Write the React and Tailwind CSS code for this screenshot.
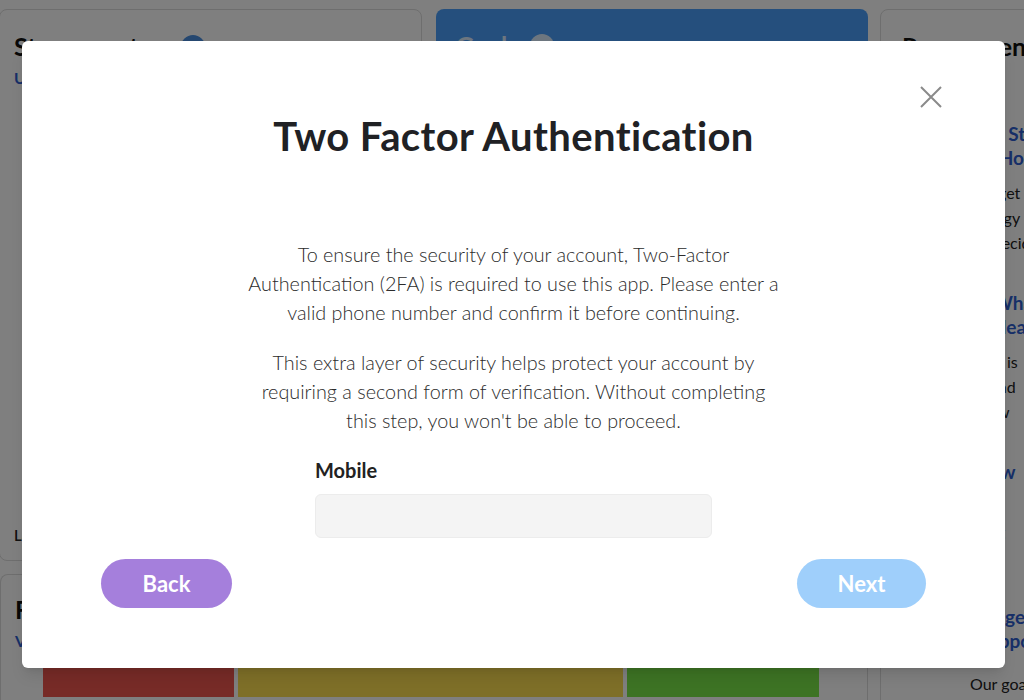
import React, { useState } from 'react';

const recs = [
  { title: ['Tips to Beat Stress that', 'Work from Home'], body: ['Learn how to get c', 'a simple strategy', 'that you can decide'] },
  { title: ['Stress and What it', 'Means for Health'], body: ['Everyone\'s life is', 'manageable and', 'know how to w'] },
  { title: ['How to Grow'], body: ['Take the first', 'step by finding', 'to manage'] },
  { title: ['Stress Management', 'Without Support'], body: ['Our goals'], indent: true },
];

const Background = () => (
  <div className="h-[700px] w-[1024px] overflow-hidden bg-white pt-[9px]">
    <div className="flex gap-3">
      <div className="flex w-[868px] shrink-0 flex-col gap-[13px]">
        <div className="flex gap-[14px]">
          {/* Stressometer */}
          <div className="-ml-px flex h-[552px] w-[423px] flex-col justify-between rounded-lg border border-[#dcdcdc] px-[14px] pb-[14px] pt-[18px]">
            <div>
              <div className="flex items-center gap-5">
                <h2 className="text-[25px] font-bold text-[#111]">Stressometer</h2>
                <span className="flex h-6 w-6 items-center justify-center rounded-full bg-[#4a8fe0] text-sm font-bold text-white">?</span>
              </div>
              <a className="text-[16px] font-bold text-[#2f5fd0]">Update</a>
            </div>
            <p className="text-[15px] font-semibold text-[#222]">Last updated today</p>
          </div>
          {/* Goals */}
          <div className="h-[552px] w-[432px] rounded-lg bg-[#4a9ffa] px-5 pt-[18px]">
            <div className="flex items-center gap-3">
              <h2 className="text-[25px] font-bold text-white/80">Goals</h2>
              <span className="flex h-6 w-6 items-center justify-center rounded-full bg-white/80 text-sm font-bold text-[#4a9ffa]">?</span>
            </div>
          </div>
        </div>
        {/* Feelings */}
        <div className="h-[140px] rounded-t-lg border border-b-0 border-[#dcdcdc] px-[14px] pt-[16px]">
          <h2 className="text-[25px] font-bold text-[#111]">Feelings</h2>
          <a className="text-[16px] font-bold text-[#2f5fd0]">View all</a>
          <div className="mt-[14px] flex gap-1 pl-7">
            <div className="h-[30px] w-[191px] bg-[#ee564e]" />
            <div className="h-[30px] w-[385px] bg-[#fcde50]" />
            <div className="h-[30px] w-[192px] bg-[#7ae648]" />
          </div>
        </div>
      </div>
      {/* Recommendations */}
      <div className="w-[420px] shrink-0 rounded-lg border border-[#dcdcdc] px-[21px] pt-[18px]">
        <h2 className="text-[25px] font-bold text-[#111]">Recommendations</h2>
        <div className="mt-[56px] flex flex-col gap-[36px]">
          {recs.map((r, i) => (
            <div key={i}>
              {r.title.map((t) => (
                <p key={t} className="text-[19px] font-bold leading-6 text-[#2f5fd0]">{t}</p>
              ))}
              <div className={r.indent ? 'mt-[18px] pl-[68px]' : 'mt-[10px]'}>
                {r.body.map((b) => (
                  <p key={b} className="text-[16px] leading-[25px] text-[#222]">{b}</p>
                ))}
              </div>
            </div>
          ))}
        </div>
      </div>
    </div>
  </div>
);

const App = () => {
  const [mobile, setMobile] = useState('');

  return (
    <div className="relative h-[700px] w-[1024px] overflow-hidden" style={{ fontFamily: 'Lato, "Open Sans", sans-serif' }}>
      <Background />

      {/* Modal overlay */}
      <div className="absolute inset-0 bg-black/50">
        <div className="absolute left-[22px] top-[41px] flex h-[627px] w-[983px] flex-col items-center rounded-md bg-white pt-[71px] text-[#222] shadow-lg">
          <button className="absolute right-[62px] top-[44px] text-[#8a8a8a]">
            <svg width="24" height="24" viewBox="0 0 24 24" fill="none" stroke="currentColor" strokeWidth="2">
              <path d="M2 2L22 22M22 2L2 22" />
            </svg>
          </button>

          <h1 className="text-[40px] font-bold leading-[48px] tracking-[0.4px] text-[#202124]">Two Factor Authentication</h1>

          <div className="mt-[80px] flex flex-col items-center gap-[21px] text-center text-[19.8px] font-light leading-[29px] text-[#2b2b2b]">
            <p>
              To ensure the security of your account, Two-Factor<br />
              Authentication (2FA) is required to use this app. Please enter a<br />
              valid phone number and confirm it before continuing.
            </p>
            <p>
              This extra layer of security helps protect your account by<br />
              requiring a second form of verification. Without completing<br />
              this step, you won't be able to proceed.
            </p>
          </div>

          <div className="mt-[23px] flex w-[397px] flex-col gap-3">
            <label className="text-[20px] font-bold leading-6 text-[#222]">Mobile</label>
            <input
              value={mobile}
              onChange={(e) => setMobile(e.target.value)}
              className="h-[44px] rounded-md border border-[#ececec] bg-[#f4f4f4] px-3 outline-none"
            />
          </div>

          <div className="mt-[21px] flex w-full justify-between px-[79px]">
            <button className="h-[49px] w-[131px] rounded-full bg-[#a57fdc] text-[22px] font-bold text-white">Back</button>
            <button className="h-[49px] w-[129px] rounded-full bg-[#9fcffb] text-[22px] font-bold text-white">Next</button>
          </div>
        </div>
      </div>
    </div>
  );
};

export default App;
